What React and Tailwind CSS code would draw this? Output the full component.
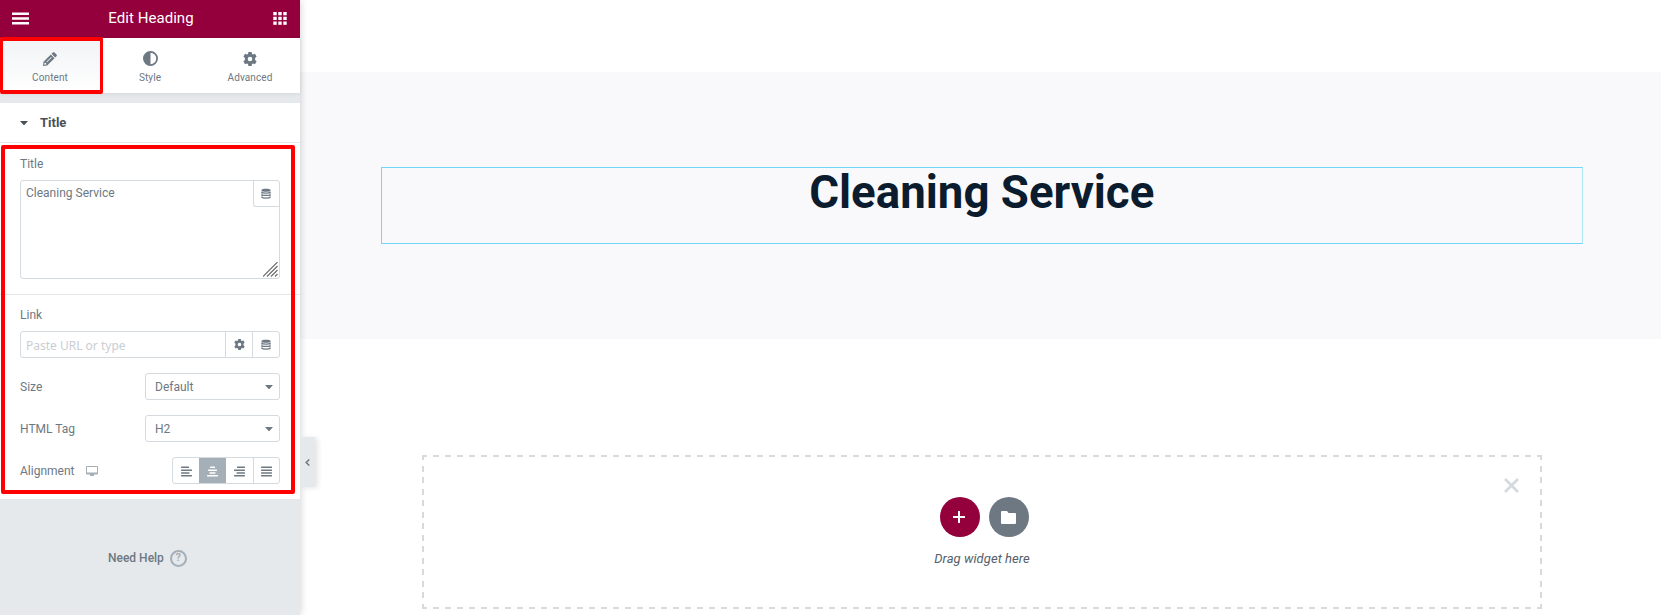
const Icon = ({ w, h, vb, children, className = '' }) => (
  <svg width={w} height={h} viewBox={vb || `0 0 ${w} ${h}`} fill="currentColor" className={`block shrink-0 ${className}`}>
    {children}
  </svg>
);

const Gear = ({ size }) => (
  <Icon w={size} h={size} vb="0 0 14 14">
    <path
      fillRule="evenodd"
      d="M5.4 0h3.2l.4 1.9 1 .6 1.9-.7 1.7 2.8-1.5 1.3v2.2l1.5 1.3-1.7 2.8-1.9-.7-1 .6-.4 1.9H5.4L5 12.100l-1-.6-1.900.7L.4 9.400l1.500-1.300V5.900L.4 4.600l1.700-2.800 1.900.7 1-.6zM7 4.700a2.300 2.300 0 1 0 0 4.600 2.300 2.300 0 0 0 0-4.600z"
    />
  </Icon>
);

const Database = () => (
  <Icon w={10} h={11}>
    <path d="M.5 2C.5.300 9.500.300 9.500 2v1c0 1-9 1-9 0z" />
    <path fill="none" stroke="currentColor" strokeWidth="1.300" d="M.6 4.300c1 1 7.800 1 8.800 0M.6 6.700c1 1 7.800 1 8.800 0M.6 9.100c1 1.300 7.800 1.300 8.800 0" />
    <path fill="none" stroke="currentColor" strokeWidth=".7" d="M.9 3.500v6M9.100 3.500v6" />
  </Icon>
);

const Pencil = () => (
  <Icon w={14} h={14}>
    <path
      fillRule="evenodd"
      d="M9.800.5c.5-.5 1.200-.5 1.700 0l2 2c.5.500.5 1.200 0 1.700l-1.300 1.300-3.700-3.700zM7.800 2.500l3.700 3.700-7.300 7.300L0 14l.5-4.200zM1.500 10.700l-.3 2.100 2-.3-.1-1.600zM3.400 9.700l.6.600 4.800-4.800-.6-.6z"
    />
  </Icon>
);

const Contrast = () => (
  <Icon w={15} h={15}>
    <circle cx="7.500" cy="7.500" r="6.600" fill="none" stroke="currentColor" strokeWidth="1.800" />
    <path d="M7.500.8v13.400a6.700 6.700 0 0 1 0-13.400z" />
  </Icon>
);

const Caret = () => (
  <Icon w={8} h={4}>
    <path d="M0 0h8L4.600 3.700q-.6.500-1.200 0z" />
  </Icon>
);

const alignRows = {
  left: [[0, 8], [0, 11], [0, 8.5], [0, 11]],
  center: [[3, 5], [1, 9], [2.5, 6], [0, 11]],
  right: [[3, 8], [0, 11], [2.5, 8.5], [0, 11]],
  justify: [[0, 11], [0, 11], [0, 11], [0, 11]],
};

const Align = ({ kind }) => (
  <Icon w={11} h={11}>
    {alignRows[kind].map(([x, w], i) => (
      <rect key={i} x={x} y={0.6 + i * 2.8} width={w} height="1.500" rx=".4" />
    ))}
  </Icon>
);

const Tab = ({ label, active, children }) => (
  <div className={`flex w-[100px] flex-col items-center ${active ? 'bg-gradient-to-b from-[#f1f3f5] to-white' : ''}`}>
    <div className="mt-[13px] flex h-[15px] items-center">{children}</div>
    <span className="mt-[6px] text-[10px] leading-[12px] tracking-[0.100px]">{label}</span>
  </div>
);

const SelectRow = ({ label, value }) => (
  <div className="mb-[15px] flex h-[27px] items-center justify-between">
    <span>{label}</span>
    <div className="flex h-[27px] w-[135px] items-center justify-between rounded-[3px] border border-[#d5dadf] pr-[6px] pl-[9px]">
      <span>{value}</span>
      <Caret />
    </div>
  </div>
);

function Panel() {
  return (
    <aside className="relative z-10 flex h-[615px] w-[300px] shrink-0 flex-col bg-[#e6e9ec] text-[12px] leading-[14px] text-[#6d7882] shadow-[0_0_8px_rgba(0,0,0,0.200)]">
      <header className="flex h-[38px] items-center justify-between bg-[#93003c] pr-[13px] pl-[12px] text-white">
        <Icon w={17} h={13} className="-mt-[1px]">
          <path d="M0 .5h17v2.500H0zM0 5.200h17v2.500H0zM0 9.900h17v2.500H0z" />
        </Icon>
        <h1 className="-mt-[2px] text-[15px] leading-[18px] tracking-[0.050px]">Edit Heading</h1>
        <Icon w={14} h={13} className="-mt-[1px]">
          {[0, 5, 10].map((y) => [0, 5, 10].map((x) => <rect key={`${x}-${y}`} x={x + 0.300} y={y * 0.950} width="3.400" height="3.300" />))}
        </Icon>
      </header>

      <nav className="relative flex h-[55px] bg-white shadow-[0_1px_4px_rgba(0,0,0,0.080)]">
        <Tab label="Content" active><Pencil /></Tab>
        <Tab label="Style"><Contrast /></Tab>
        <Tab label="Advanced"><Gear size={14} /></Tab>
        <div className="absolute top-[-1px] left-0 h-[57px] w-[103px] rounded-[2px] border-[3px] border-t-[4px] border-b-[4px] border-[#ff0000]" />
      </nav>

      <section className="relative mt-[10px] flex h-[396px] flex-col bg-white">
        <div className="flex h-[40px] items-center border-b border-[#e6e9ec] pl-[20px] text-[#495157]">
          <Caret />
          <h2 className="ml-[12px] text-[13px] font-bold">Title</h2>
        </div>

        <div className="flex h-[152px] flex-col border-b border-[#e6e9ec] px-[20px] pt-[14px]">
          <span>Title</span>
          <div className="mt-[9px] flex h-[99px] items-start justify-between rounded-[3px] border border-[#d5dadf]">
            <span className="mt-[5px] ml-[5px]">Cleaning Service</span>
            <div className="flex h-full flex-col items-end justify-between">
              <div className="flex h-[26px] w-[26px] items-center justify-center rounded-bl-[3px] border-b border-l border-[#d5dadf] pr-[1px]">
                <Database />
              </div>
              <Icon w={15} h={15} className="mr-[1px] mb-[1px]">
                <path fill="none" stroke="#6a6a6a" strokeWidth="1.100" d="M0 14.500L14.500 0M4 14.500L14.500 4M8 14.500L14.500 8M12 14.500L14.500 12" />
              </Icon>
            </div>
          </div>
        </div>

        <div className="flex flex-col px-[20px] pt-[13px]">
          <span>Link</span>
          <div className="mt-[9px] mb-[15px] flex h-[27px] rounded-[3px] border border-[#d5dadf]">
            <span className="flex flex-1 items-center pt-[2px] pl-[5px] font-['Noto_Sans',sans-serif] text-[12px] text-[#caced2]">
              Paste URL or type
            </span>
            <span className="flex w-[27px] items-center justify-center border-l border-[#d5dadf]"><Gear size={11} /></span>
            <span className="flex w-[27px] items-center justify-center border-l border-[#d5dadf]"><Database /></span>
          </div>
          <SelectRow label="Size" value="Default" />
          <SelectRow label="HTML Tag" value="H2" />
          <div className="flex h-[27px] items-center">
            <span>Alignment</span>
            <Icon w={12} h={10} className="ml-[12px] text-[#a4afb7]">
              <path fillRule="evenodd" d="M1 0h10q1 0 1 1v6.500q0 1-1 1H8V10H4V8.500H1q-1 0-1-1V1q0-1 1-1zM1 1v5.500h10V1z" />
            </Icon>
            <div className="ml-auto flex h-[27px] w-[108px] overflow-hidden rounded-[3px] border border-[#d5dadf]">
              <span className="flex w-[26px] items-center justify-center pt-[2px]"><Align kind="left" /></span>
              <span className="-my-px flex w-[27px] items-center justify-center bg-[#a4afb7] pt-[2px] text-white"><Align kind="center" /></span>
              <span className="flex w-[27px] items-center justify-center pt-[2px]"><Align kind="right" /></span>
              <span className="flex w-[26px] items-center justify-center border-l border-[#d5dadf] pt-[2px]"><Align kind="justify" /></span>
            </div>
          </div>
        </div>
        <div className="absolute top-[42px] left-[1px] h-[349px] w-[294px] rounded-[2px] border-[4px] border-[#ff0000]" />
      </section>

      <footer className="mt-[50px] flex h-[18px] items-center pl-[108px] font-medium">
        <span>Need Help</span>
        <span className="ml-[6px] flex h-[17px] w-[17px] items-center justify-center rounded-full border-2 border-[#a4afb7] text-[11px] font-bold text-[#a4afb7]">?</span>
      </footer>

      <button className="absolute top-[437px] left-[300px] flex h-[50px] w-[15px] items-center justify-center bg-[#e6e9ec] shadow-[3px_1px_5px_rgba(0,0,0,0.100)]">
        <Icon w={5} h={7}>
          <path fill="none" stroke="currentColor" strokeWidth="1.500" d="M4.300.5L1.200 3.500l3.100 3" />
        </Icon>
      </button>
    </aside>
  );
}

function Canvas() {
  return (
    <main className="flex h-[615px] flex-1 flex-col bg-white pt-[72px]">
      <section className="flex h-[267px] flex-col bg-[#f9f9fc] pt-[95px] pr-[78px] pl-[81px]">
        <div className="flex h-[77px] justify-center border border-[#71d7f7] border-r-[#b0e6f8]">
          <h1 className="origin-center scale-x-[0.971] text-[47px] leading-[48px] font-bold whitespace-nowrap text-[#0a1c2e]">
            Cleaning Service
          </h1>
        </div>
      </section>
      <section className="mt-[116px] mr-[119px] ml-[122px] flex h-[154px] flex-col items-center bg-[image:repeating-linear-gradient(90deg,#d5dadf_0px_5px,transparent_5px_11px,#d5dadf_11px_12px),repeating-linear-gradient(90deg,#d5dadf_0px_5px,transparent_5px_11px,#d5dadf_11px_12px),repeating-linear-gradient(180deg,#d5dadf_0px_5px,transparent_5px_10.540px,#d5dadf_10.540px_11.540px),repeating-linear-gradient(180deg,#d5dadf_0px_5px,transparent_5px_10.540px,#d5dadf_10.540px_11.540px)] bg-[size:100%_2px,100%_2px,2px_100%,2px_100%] bg-[position:top,bottom,left,right] bg-no-repeat pt-[42px]">
        <div className="relative flex w-full justify-center gap-[9px] pl-[4px]">
          <span className="flex h-[40px] w-[40px] items-center justify-center rounded-full bg-[#93003c] text-white">
            <Icon w={12} h={12} className="-ml-[1px]"><path d="M5 0h2v5h5v2H7v5H5V7H0V5h5z" /></Icon>
          </span>
          <span className="flex h-[40px] w-[40px] items-center justify-center rounded-full bg-[#6d7882] text-white">
            <Icon w={15} h={13} className="-ml-[1px] mt-[1px]"><path d="M1 0h5l1.500 2H14q1 0 1 1v9q0 1-1 1H1q-1 0-1-1V1q0-1 1-1z" /></Icon>
          </span>
          <Icon w={15} h={15} className="absolute top-[-19px] right-[23px] text-[#d5dadf]">
            <path fill="none" stroke="currentColor" strokeWidth="2.800" d="M1 1l13 13M14 1L1 14" />
          </Icon>
        </div>
        <p className="mt-[14px] text-[13px] leading-[16px] tracking-[0.050px] text-[#556068] italic">Drag widget here</p>
      </section>
    </main>
  );
}

export default function App() {
  return (
    <div className="flex h-[615px] w-full overflow-hidden bg-white font-['Roboto',sans-serif]">
      <Panel />
      <Canvas />
    </div>
  );
}
